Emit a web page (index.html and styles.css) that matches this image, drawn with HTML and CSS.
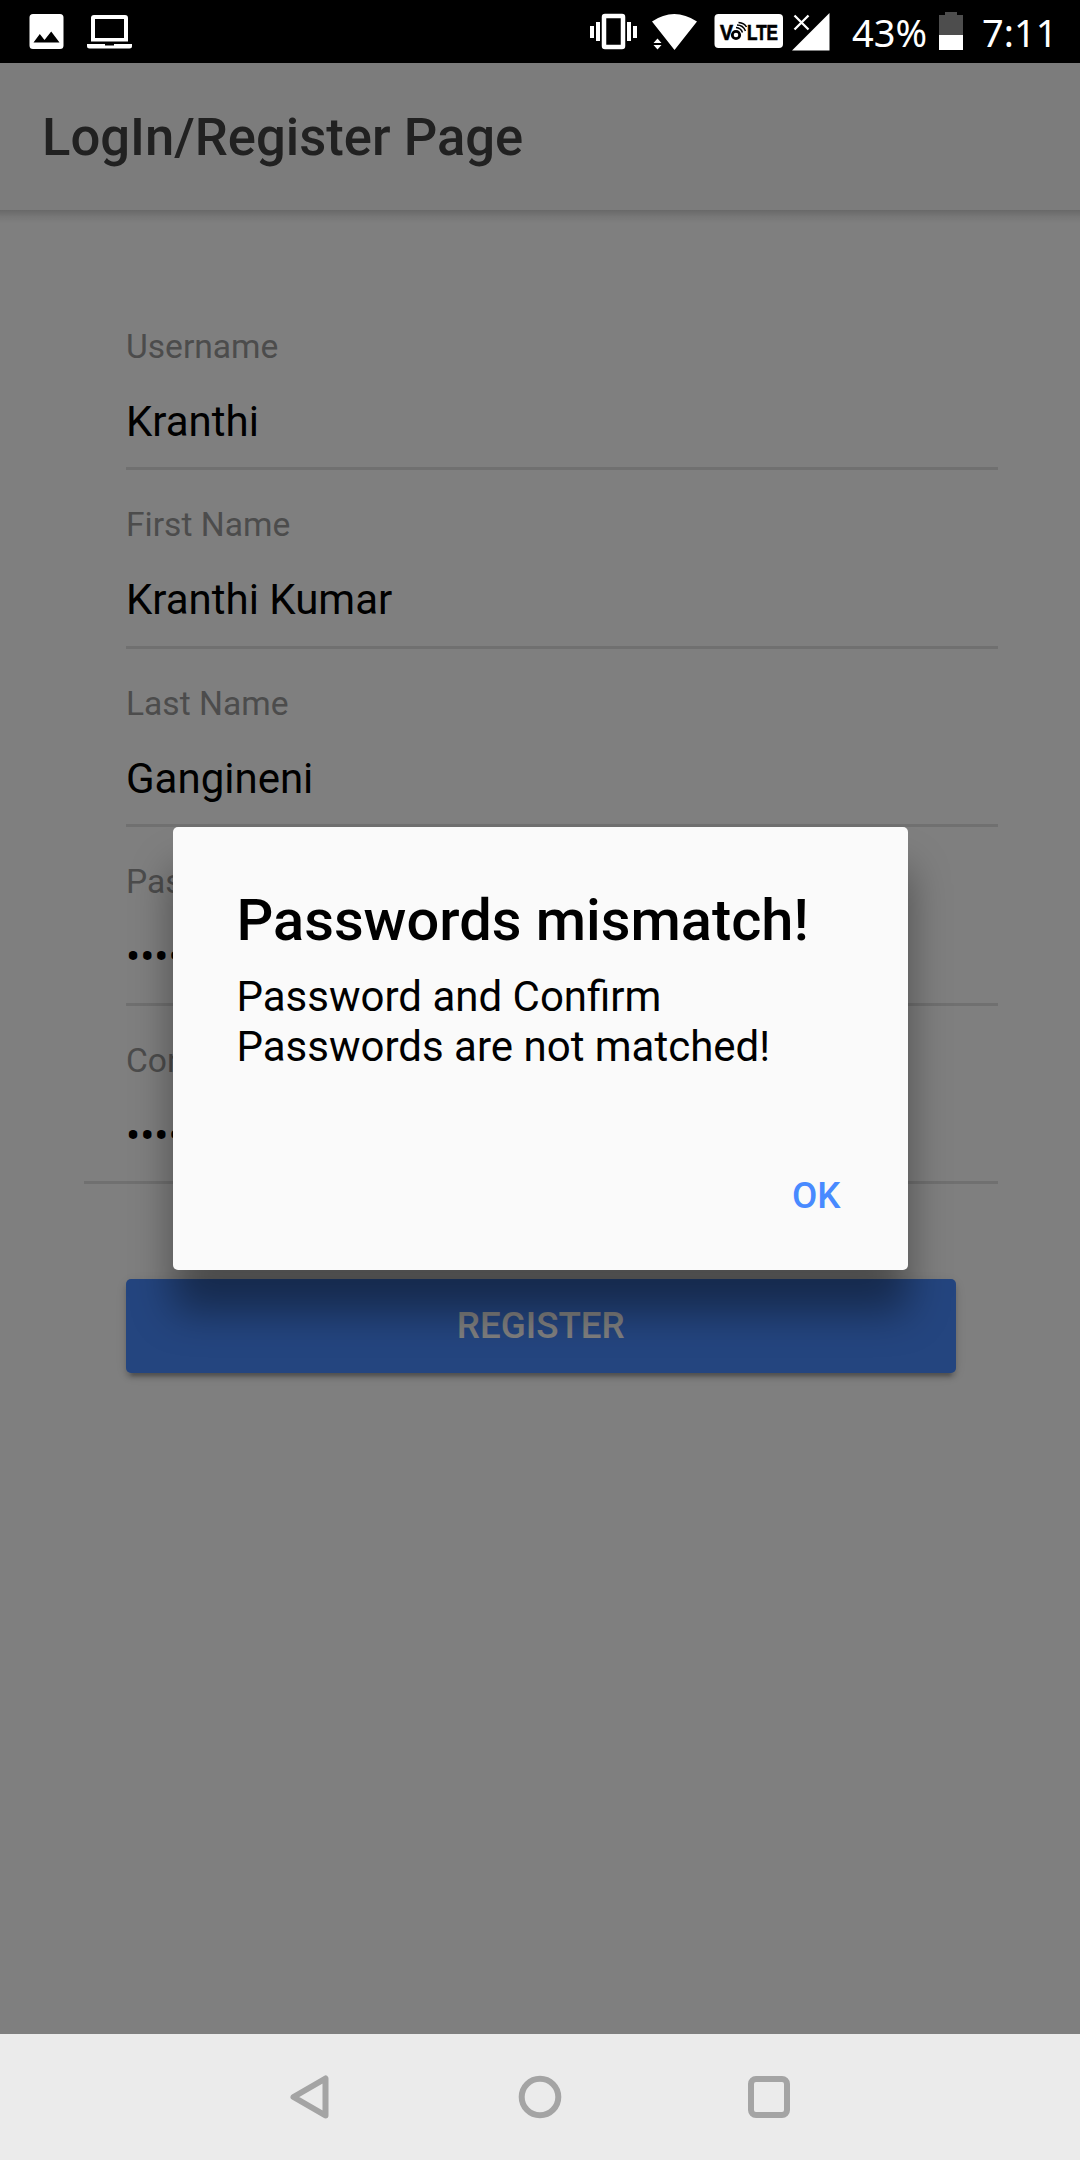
FILE: index.html
```html
<!DOCTYPE html>
<html lang="en">
<head>
<meta charset="utf-8">
<title>LogIn/Register Page</title>
<link rel="stylesheet" href="styles.css">
</head>
<body>
<div class="status">
  <svg class="status-left" width="150" height="63" viewBox="0 0 150 63">
    <path fill="#fff" fill-rule="evenodd" d="M33 14h27q3.500 0 3.500 3.500v28q0 3.500-3.500 3.500h-27q-3.500 0-3.500-3.500v-28q0-3.500 3.500-3.500zM33.500 42.500h26l-8.300-11-6.700 8.500-4.700-6z"/>
    <path fill="#fff" fill-rule="evenodd" d="M94 15h31q3 0 3 3v23.500h-37v-23.500q0-3 3-3zM95 19v19h29v-19z"/>
    <path fill="#fff" d="M87 44h18v1.500h9v-1.500h18v2q0 2.500-2.500 2.500h-40q-2.500 0-2.500-2.500z"/>
  </svg>
  <div class="status-right">
    <svg width="270" height="63" viewBox="570 0 270 63">
      <rect x="604" y="16" width="19" height="31" rx="1" fill="none" stroke="#fff" stroke-width="4.500"/>
      <path fill="#fff" d="M590 26h4v12h-4zM596 22h4v19h-4zM627 22h4v19h-4zM633 26h4v12h-4z"/>
      <path fill="#fff" d="M652 21.500Q674 6.500 697 21.500L674.500 50zM657.500 38.500l4 4.500h-8zM653.500 45h8l-4 4.500z"/>
      <rect x="714.500" y="14" width="68.500" height="34" rx="4" fill="#fff"/>
      <text class="volte" x="720" y="39.500" textLength="13" lengthAdjust="spacingAndGlyphs">V</text>
      <circle cx="736" cy="35" r="3.700" fill="#fff" stroke="#000" stroke-width="2.800"/>
      <path d="M736 27.500q5 .5 6.500 5M737 25q6 0 8.500 6M738.500 22.500q6 .5 8 4.500" fill="none" stroke="#000" stroke-width="1.500"/>
      <text class="volte" x="747" y="39.500" textLength="31" lengthAdjust="spacingAndGlyphs">LTE</text>
      <path d="M829.500 13v37.500H792z" fill="#fff"/>
      <path d="M794.500 15.500l14 14M808.500 15.500l-14 14" stroke="#fff" stroke-width="2.300"/>
    </svg>
    <span class="percent">43%</span>
    <svg class="battery" width="24" height="63" viewBox="0 0 24 63">
      <path fill="#4d4d4d" d="M0 15h6v-3h12v3h6v20H0z"/><path fill="#fff" d="M0 35h24v15H0z"/>
    </svg>
    <span class="clock">7:11</span>
  </div>
</div>
<div class="app">
  <header class="toolbar"><h1 class="toolbar-title">LogIn/Register Page</h1></header>
  <main class="content">
    <div class="item"><div class="item-inner"><label class="label">Username</label><div class="input">Kranthi</div></div></div>
    <div class="item"><div class="item-inner"><label class="label">First Name</label><div class="input">Kranthi Kumar</div></div></div>
    <div class="item"><div class="item-inner"><label class="label">Last Name</label><div class="input">Gangineni</div></div></div>
    <div class="item"><div class="item-inner"><label class="label">Password</label><div class="input">••••••</div></div></div>
    <div class="item item-last"><div class="item-inner"><label class="label">Confirm Password</label><div class="input">•••••••</div></div></div>
    <button class="register">REGISTER</button>
  </main>
  <div class="backdrop">
    <div class="alert">
      <h2 class="alert-title">Passwords mismatch!</h2>
      <p class="alert-message">Password and Confirm Passwords are not matched!</p>
      <div class="alert-buttons"><button class="ok">OK</button></div>
    </div>
  </div>
</div>
<nav class="navbar">
  <svg width="44" height="48" viewBox="0 0 44 48"><path d="M36.500 5.500v37L4.500 24z" /></svg>
  <svg width="44" height="48" viewBox="0 0 44 48"><circle cx="22" cy="24" r="18.300"/></svg>
  <svg width="44" height="48" viewBox="0 0 44 48"><rect x="4" y="6" width="36" height="36" rx="5"/></svg>
</nav>
</body>
</html>
```
FILE: styles.css
```css
* { box-sizing: border-box; }
body {
  margin: 0;
  width: 1080px;
  height: 2160px;
  display: flex;
  flex-direction: column;
  overflow: hidden;
  font-family: Roboto, "Liberation Sans", sans-serif;
}
h1, h2, p { margin: 0; font-weight: 400; }
button { border: 0; font-family: inherit; padding: 0; }
svg { display: block; }

.status {
  height: 63px;
  flex: none;
  background: #000;
  color: #fff;
  display: flex;
  justify-content: space-between;
  font: 38px/64px "Noto Sans", sans-serif;
}
.status-right { display: flex; width: 510px; }
.percent { width: 87px; margin-left: 12px; }
.battery { margin-right: 19px; }
.volte { font: 700 22px "Liberation Sans", sans-serif; fill: #000; stroke: #000; stroke-width: .7; }

.app {
  position: relative;
  height: 1971px;
  flex: none;
  background: #fff;
}
.toolbar {
  height: 147px;
  padding-left: 42px;
  display: flex;
  align-items: center;
  background: #f8f8f8;
}
.toolbar-title { font-size: 52.6px; font-weight: 500; color: #424242; }
.content {
  height: 1824px;
  padding: 81.5px 82.5px 0 84px;
  background: linear-gradient(rgba(0,0,0,.18), rgba(0,0,0,.06) 7px, transparent 14px) no-repeat;
}
.item { height: 178.5px; padding-left: 42px; }
.item-inner {
  height: 100%;
  border-bottom: 3px solid #e0e0e0;
  padding-top: 35px;
}
.item-last { padding-left: 0; }
.item-last .item-inner { padding-left: 42px; }
.label { display: block; font-size: 33.6px; line-height: 40px; color: #999; }
.input { font-size: 42px; line-height: 50px; margin-top: 30px; color: #000; }
.register {
  display: block;
  width: 829.5px;
  height: 94.5px;
  margin: 94.5px 0 0 42px;
  border-radius: 5px;
  background: #488aff;
  color: #fff;
  font-size: 36.75px;
  font-weight: 500;
  box-shadow: 0 5px 5px rgba(0,0,0,.14), 0 8px 3px -5px rgba(0,0,0,.2), 0 3px 13px rgba(0,0,0,.12);
}

.backdrop {
  position: absolute;
  inset: 0;
  background: rgba(0,0,0,.5);
  display: flex;
  align-items: center;
  justify-content: center;
}
.alert {
  width: 735px;
  height: 443px;
  border-radius: 5px;
  background: #fafafa;
  box-shadow: 0 42px 42px rgba(0,0,0,.4);
  padding: 59px 62px 0 64px;
  color: #000;
}
.alert-title { font-size: 57.75px; line-height: 68px; font-weight: 500; white-space: nowrap; }
.alert-message { font-size: 42px; line-height: 50px; margin-top: 18px; }
.alert-buttons { display: flex; justify-content: flex-end; padding-top: 102px; }
.ok { background: none; color: #488aff; font-size: 36.75px; line-height: 44px; font-weight: 500; margin-right: 5px; }

.navbar {
  height: 126px;
  flex: none;
  background: #ebebeb;
  display: flex;
  justify-content: center;
  align-items: center;
  gap: 185px;
}
.navbar svg { fill: none; stroke: #a4a4a4; stroke-width: 6; stroke-linejoin: round; }
```
